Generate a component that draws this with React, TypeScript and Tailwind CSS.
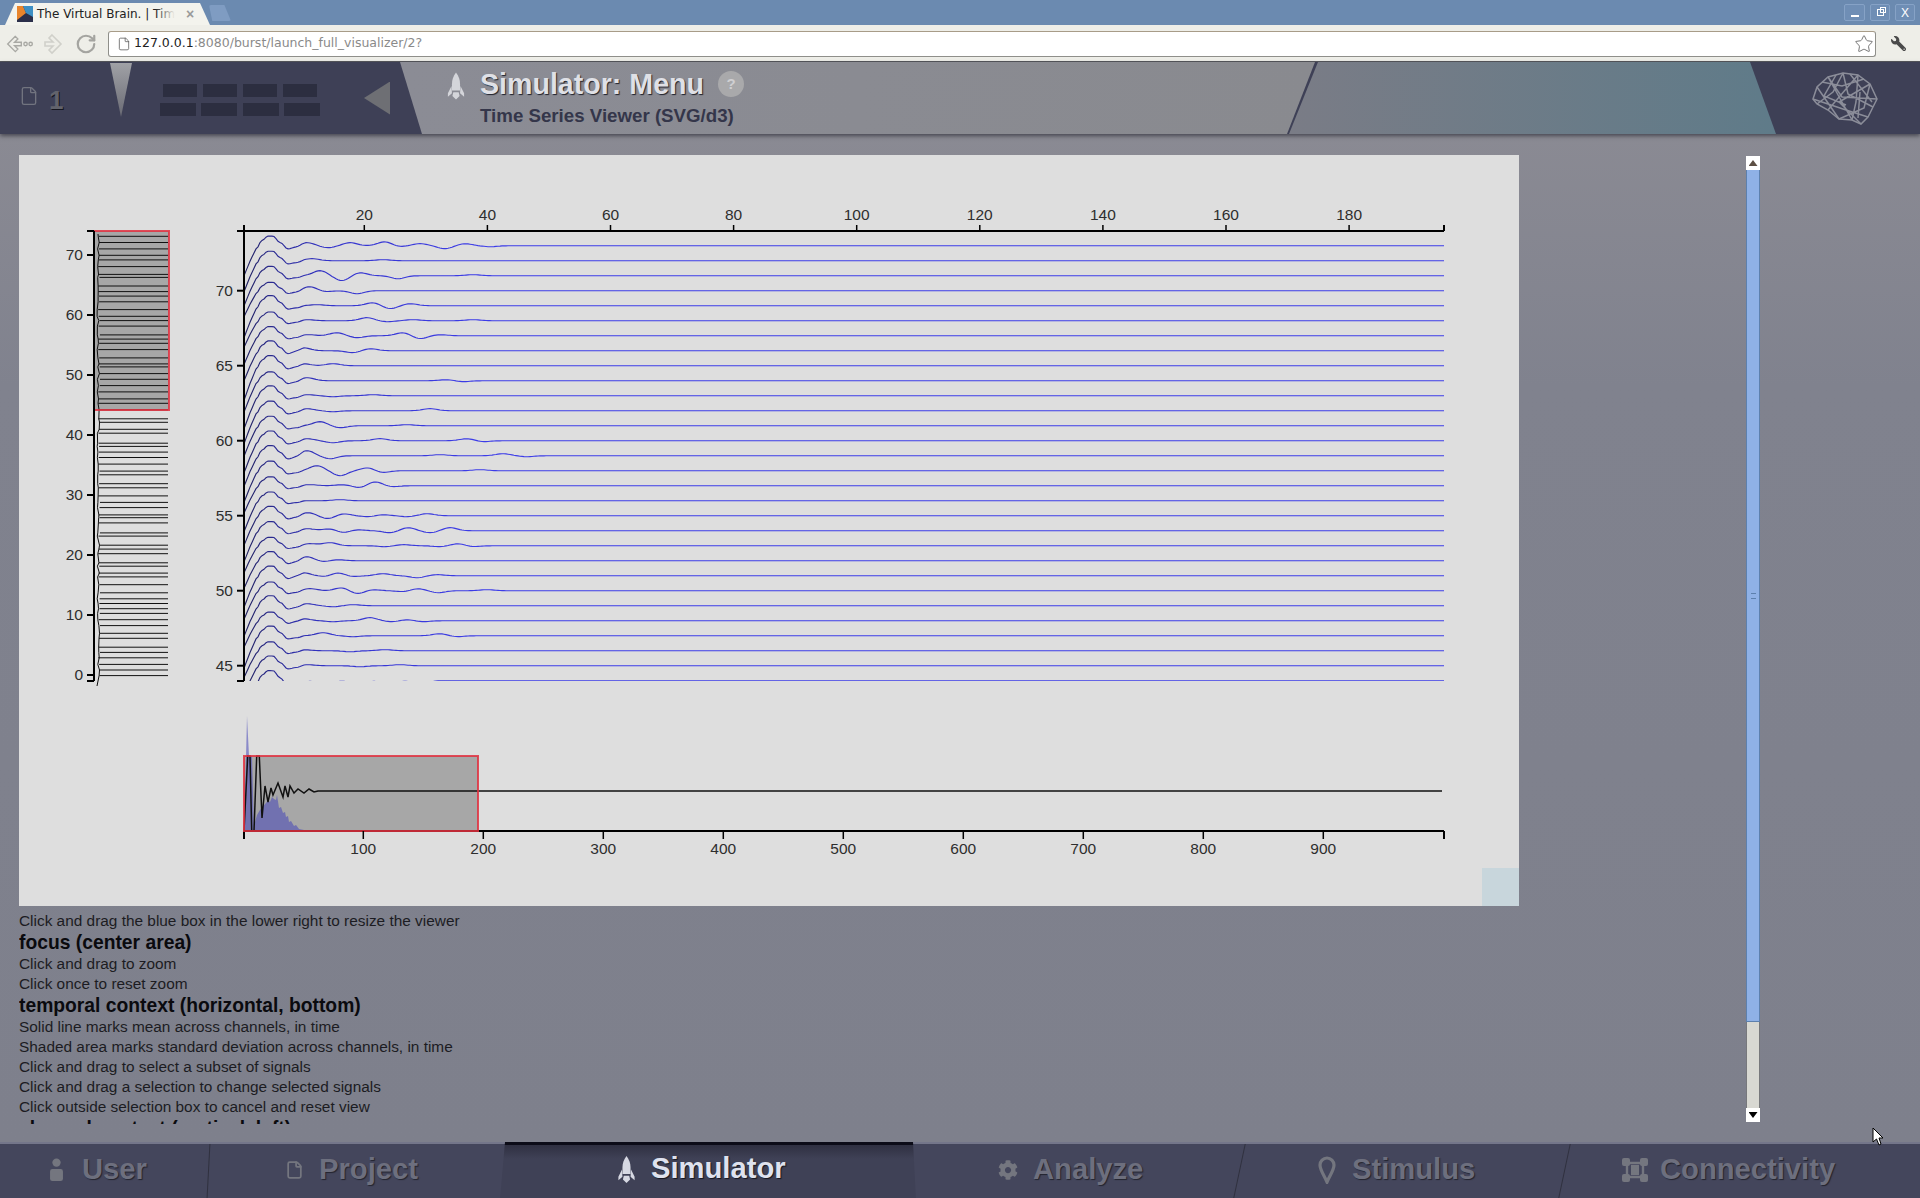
import { File, RotateCw, Star } from "lucide-react";
import { FaCog, FaWrench } from "react-icons/fa";

type Bump = [number, number];

// channel 73 down to channel 44, [screen x, offset in px]
const TRACE_BUMPS: Bump[][] = [
  [[307, -3], [328, 2], [350, -3], [385, -4], [398, 1], [420, -2], [445, 3], [465, -2], [490, 1]],
  [[312, -2], [383, -1]],
  [[320, -5], [342, 5], [360, -3], [398, 3], [473, -1]],
  [[310, -4], [325, 1], [357, 3]],
  [[317, -1], [373, -3], [390, 3], [410, -2]],
  [[307, -1], [367, -3], [387, 1], [413, -1], [473, -1]],
  [[308, -1], [337, -3], [357, 2], [403, -3], [420, 3], [440, -1]],
  [[303, -3], [353, 2], [370, -2]],
  [[303, -2], [333, -2]],
  [[307, -3], [447, -1], [463, 1]],
  [[307, -1], [333, 1], [373, -1]],
  [[307, -2], [333, 1], [430, -2]],
  [[320, -4], [340, 2], [407, -1]],
  [[307, -2], [333, 2], [380, -2], [467, -2], [483, 1]],
  [[307, -5], [330, 3], [440, -1], [503, -2], [527, 1]],
  [[317, -5], [340, 5], [368, -3], [382, 2], [480, -1]],
  [[310, -1], [343, -1], [360, 2], [375, -4], [392, 1]],
  [[340, -1]],
  [[308, -3], [328, 3], [343, -2], [368, 1], [383, -1], [407, 1], [427, -2]],
  [[307, -2], [330, -2], [343, 2], [357, -1], [390, 2], [408, -3], [430, 2], [450, -3]],
  [[310, -2], [330, -3], [385, 1], [403, -1], [440, 1], [458, -2], [473, 1]],
  [[307, -4], [323, 1], [337, -1]],
  [[303, -3], [327, 1], [338, -3], [352, 1], [383, -2], [417, 2], [437, -1]],
  [[310, -2], [342, -3], [357, 3], [373, -1], [403, 1], [418, -2], [438, 2], [487, -1]],
  [[307, -2], [333, 1], [353, -1]],
  [[303, -2], [333, 1], [370, -3], [392, 1], [407, -1], [423, 1]],
  [[323, -3], [353, 1], [440, -2], [457, 1]],
  [[303, -1], [350, 1], [385, -1]],
  [[307, -1], [360, 1], [400, -1]],
  [[295, 4], [326, 4], [358, 4], [389, 4], [421, 4]],
];

const START_SHAPE: Bump[] = [
  [244, 27], [250, 14], [256, 3], [262, -5], [268, -9], [273, -9], [280, -3], [288, 3], [296, 2], [306, 0],
];

function noise(seed: number) {
  const v = Math.sin(seed * 127.1 + 11.7) * 43758.5453;
  return v - Math.floor(v);
}

function startOffset(x: number) {
  for (let i = 0; i < START_SHAPE.length - 1; i++) {
    const [x0, y0] = START_SHAPE[i];
    const [x1, y1] = START_SHAPE[i + 1];
    if (x >= x0 && x <= x1) {
      const t = (1 - Math.cos((Math.PI * (x - x0)) / (x1 - x0))) / 2;
      return y0 + (y1 - y0) * (i < 2 ? (x - x0) / (x1 - x0) : t);
    }
  }
  return 0;
}

function tracePath(row: number) {
  const base = 245.7 + row * 15;
  const bumps = TRACE_BUMPS[row];
  const scale = 0.92 + noise(row) * 0.2;
  let d = "";
  for (let x = 244; x <= 620; x += 2) {
    const extra = x < 256 ? (noise(row + 40) * 5 * (256 - x)) / 12 : 0;
    let y = base + startOffset(x) * scale + extra;
    for (const [bx, amp] of bumps) y += amp * Math.exp(-(((x - bx) / 10) ** 2));
    d += `${d ? "L" : "M"}${x} ${y.toFixed(1)}`;
  }
  return `${d}L1444 ${base.toFixed(1)}`;
}

function overviewPaths() {
  const rows: string[] = [];
  let spine = "M98 234";
  for (let ch = 73; ch >= 0; ch--) {
    const y = 675 - ch * 6 + (noise(ch + 90) - 0.5) * 4.5;
    rows.push(`M${98 + noise(ch) * 2} ${y.toFixed(1)}L168 ${y.toFixed(1)}`);
    spine += `L${(97 + noise(ch + 7) * 2.5).toFixed(1)} ${y.toFixed(1)}`;
  }
  return `${rows.join("")}${spine}L97 686`;
}

const AREA_POINTS =
  "244,831 245,800 247,716 249,756 252,756 254,831 255,822 257,815 260,810 263,806 266,803 268,800 270,802 272,797 274,799 276,800 277,795 279,808 281,807 283,813 285,812 286,817 288,816 289,822 291,821 294,826 296,825 299,829 304,830 308,831";
const MEAN_POINTS =
  "244,831 247.7,756 250,756 251.7,831 254,831 256.7,756 259.3,756 262,818 265,786 268,802 271,788 273,795 278,783 283,797 285,786 288,797 290,786 294,793 298,789 304,793 309,789 314,792 318,791 1442,791";

function TimeSeriesChart() {
  const topTicks = [20, 40, 60, 80, 100, 120, 140, 160, 180];
  const sideTicks = [70, 65, 60, 55, 50, 45];
  const overviewTicks = [70, 60, 50, 40, 30, 20, 10, 0];
  const contextTicks = [100, 200, 300, 400, 500, 600, 700, 800, 900];
  return (
    <svg viewBox="19 155 1500 751" className="block h-full w-full text-[15.5px] fill-[#2e2e2e]">
      <defs>
        <clipPath id="focus-clip">
          <rect x="244" y="231" width="1200" height="450" />
        </clipPath>
        <linearGradient id="trace-stroke" gradientUnits="userSpaceOnUse" x1="244" y1="0" x2="640" y2="0">
          <stop offset="0" stopColor="#22225e" />
          <stop offset="0.07" stopColor="#2a2a90" />
          <stop offset="0.22" stopColor="#3434cc" />
          <stop offset="0.6" stopColor="#3c3ce8" />
        </linearGradient>
      </defs>

      {/* channel overview, left */}
      <rect x="94" y="231" width="75" height="179" fill="#7a7a7a" fillOpacity="0.55" />
      <path d={overviewPaths()} fill="none" stroke="#111" strokeWidth="1" />
      <rect x="94" y="231" width="75" height="179" fill="none" stroke="#e0303f" strokeOpacity="0.85" strokeWidth="2" />
      <path d="M94 231V681M87 231H94M87 681H94" stroke="#000" strokeWidth="2" fill="none" />
      {overviewTicks.map((t) => (
        <g key={t}>
          <path d={`M87 ${675 - t * 6}H94`} stroke="#000" strokeWidth="2" />
          <text x="83" y={680 - t * 6} textAnchor="end">
            {t}
          </text>
        </g>
      ))}

      {/* focus area */}
      <g clipPath="url(#focus-clip)" fill="none" stroke="url(#trace-stroke)" strokeWidth="1.15">
        {TRACE_BUMPS.map((_, row) => (
          <path key={row} d={tracePath(row)} />
        ))}
      </g>
      <path d="M244 225V681M237 231H1444M1444 225V231M237 681H244" stroke="#000" strokeWidth="2" fill="none" />
      {topTicks.map((t) => {
        const x = 364.3 + (t - 20) * 6.155;
        return (
          <g key={t}>
            <path d={`M${x} 225V231`} stroke="#000" strokeWidth="1.5" />
            <text x={x} y="220" textAnchor="middle">
              {t}
            </text>
          </g>
        );
      })}
      {sideTicks.map((t) => {
        const y = 290.7 + (70 - t) * 15;
        return (
          <g key={t}>
            <path d={`M237 ${y}H244`} stroke="#000" strokeWidth="2" />
            <text x="233" y={y + 5} textAnchor="end">
              {t}
            </text>
          </g>
        );
      })}

      {/* temporal context, bottom */}
      <rect x="244" y="756" width="234" height="75" fill="#7a7a7a" fillOpacity="0.55" />
      <polygon points={AREA_POINTS} fill="#4646b8" fillOpacity="0.55" />
      <polyline points={MEAN_POINTS} fill="none" stroke="#111" strokeWidth="1.5" />
      <path d="M244 831H1444M244 831V839M1444 831V839" stroke="#000" strokeWidth="2" fill="none" />
      <rect x="244" y="756" width="234" height="75" fill="none" stroke="#e0303f" strokeOpacity="0.85" strokeWidth="2" />
      {contextTicks.map((t) => {
        const x = 243.3 + t * 1.2;
        return (
          <g key={t}>
            <path d={`M${x} 831V839`} stroke="#000" strokeWidth="1.5" />
            <text x={x} y="854" textAnchor="middle">
              {t}
            </text>
          </g>
        );
      })}
    </svg>
  );
}

function RocketIcon({ className }: { className: string }) {
  return (
    <svg viewBox="0 0 20 30" className={className} fill="currentColor">
      <path d="M10 0C13 4 14.5 8 14.5 13V20H5.5V13C5.5 8 7 4 10 0Z" />
      <path d="M5 15L1 23V27L5.5 23ZM15 15L19 23V27L14.5 23ZM7 22H13L14 26L10 30L6 26Z" />
    </svg>
  );
}

function UserIcon({ className }: { className: string }) {
  return (
    <svg viewBox="0 0 16 26" className={className} fill="currentColor">
      <circle cx="8" cy="5" r="4.5" />
      <rect x="1" y="12" width="14" height="13" rx="2.5" />
    </svg>
  );
}

function PinIcon({ className }: { className: string }) {
  return (
    <svg viewBox="0 0 18 28" className={className} fill="none" stroke="currentColor" strokeWidth="3.2">
      <path d="M9 26C6 19 2 14 2 9A7 7 0 0 1 16 9C16 14 12 19 9 26Z" />
    </svg>
  );
}

function ConnectivityIcon({ className }: { className: string }) {
  return (
    <svg viewBox="0 0 26 24" className={className} fill="currentColor">
      <path d="M5 5H21V19H5Z" fill="none" stroke="currentColor" strokeWidth="2.4" />
      <rect x="0" y="0" width="8" height="8" rx="2" />
      <rect x="18" y="0" width="8" height="8" rx="2" />
      <rect x="0" y="16" width="8" height="8" rx="2" />
      <rect x="18" y="16" width="8" height="8" rx="2" />
      <rect x="9" y="7" width="8" height="10" />
    </svg>
  );
}

function BrainMesh() {
  return (
    <svg viewBox="0 0 66 53" className="h-[53px] w-[66px]" fill="none" stroke="#8b8d99" strokeWidth="1.5">
      <path d="M1 27L5 15L16 5L31 1L46 3L58 12L65 27L61 35L56 45L49 52L40 48L27 47L16 38L5 32Z" />
      <path d="M5 15L27 47M16 5L40 48M31 1L21 20L5 32M46 3L16 38M58 12L27 30L49 52M65 27L30 25L16 5M61 35L36 22L31 1M56 45L34 38L1 27M46 3L44 30L40 48M58 12L52 36L27 47M10 10L30 14L52 7M38 2L60 30M24 3L12 24L34 33M48 20L46 46" />
    </svg>
  );
}

function ChromeBar() {
  return (
    <>
      <div className="flex h-[25px] items-end bg-[#6b8ab0] pl-[5px]">
        <div className="relative flex h-[22px] w-[205px] items-center overflow-hidden bg-[#f3f3ed] pl-[12px]">
          <svg viewBox="0 0 16 16" className="mr-[4px] h-[16px] w-[16px] flex-none">
            <rect width="16" height="16" fill="#2b2f4a" />
            <path d="M0 0H6L9 7L0 14Z" fill="#e8842c" />
            <path d="M16 0H6L9 7L16 11Z" fill="#3d8fc4" />
          </svg>
          <span className="whitespace-nowrap font-['DejaVu_Sans',sans-serif] text-[12px] text-[#222]">The Virtual Brain. | Tim</span>
          <div className="absolute left-[150px] top-0 h-full w-[20px] bg-[linear-gradient(90deg,rgba(243,243,237,0),#f3f3ed)]" />
          <span className="absolute left-[181px] text-[14px] font-bold leading-none text-[#9a9a9a]">×</span>
          <div className="absolute left-0 top-0 h-full w-[10px] bg-[#6b8ab0] [clip-path:polygon(0_0,100%_0,0_100%)]" />
          <div className="absolute right-0 top-0 h-full w-[10px] bg-[#6b8ab0] [clip-path:polygon(0_0,100%_0,100%_100%)]" />
        </div>
        <div className="mb-[4px] ml-[-1px] h-[16px] w-[22px] rounded-[2px] bg-[#7f9cc2] [clip-path:polygon(0_0,70%_0,100%_100%,15%_100%)]" />
        <div className="ml-auto mb-[4px] mr-[5px] flex gap-[5px] text-white">
          <div className="flex h-[17px] w-[21px] items-end justify-center rounded-[2px] border border-[#86a2c6] bg-[#6f8eb5] pb-[3px]">
            <div className="h-[2px] w-[8px] bg-white" />
          </div>
          <div className="flex h-[17px] w-[20px] items-center justify-center rounded-[2px] border border-[#86a2c6] bg-[#6f8eb5]">
            <div className="relative h-[7px] w-[7px] border border-white">
              <div className="absolute left-[2px] top-[-3px] h-[6px] w-[6px] border border-white" />
            </div>
          </div>
          <div className="flex h-[17px] w-[20px] items-center justify-center rounded-[2px] border border-[#86a2c6] bg-[#6f8eb5] text-[12px] leading-none">X</div>
        </div>
      </div>
      <div className="flex h-[37px] items-center border-b border-[#55565c] bg-[#eeeee8] pl-[6px] pr-[10px] pt-[1px]">
        <svg viewBox="0 0 40 22" className="h-[22px] w-[34px] flex-none" fill="none" stroke="#a9a9a4" strokeWidth="1.6">
          <path d="M11 2L2 11L11 20L14 17L10 13H18V9H10L14 5Z" />
          <circle cx="23" cy="11" r="2" />
          <circle cx="29" cy="11" r="2" />
        </svg>
        <svg viewBox="0 0 20 22" className="ml-[3px] h-[22px] w-[20px] flex-none" fill="none" stroke="#d0d0ca" strokeWidth="1.6">
          <path d="M9 2L18 11L9 20L6 17L10 13H2V9H10L6 5Z" />
        </svg>
        <RotateCw className="ml-[12px] h-[22px] w-[22px] flex-none text-[#a4a4a0]" strokeWidth={2.4} />
        <div className="ml-[11px] flex h-[26px] flex-1 items-center rounded-[3px] border border-[#8f8f8a] border-t-[#a89c88] bg-white pl-[8px] pr-[1px] font-['DejaVu_Sans',sans-serif] text-[12.5px]">
          <File className="mr-[3px] h-[14px] w-[14px] flex-none text-[#555]" strokeWidth={1.3} />
          <span className="text-[#222]">127.0.0.1</span>
          <span className="text-[#8a8a8a]">:8080/burst/launch_full_visualizer/2?</span>
          <Star className="ml-auto h-[20px] w-[20px] text-[#777]" strokeWidth={1.2} />
        </div>
        <FaWrench className="ml-[15px] mr-[4px] h-[15px] w-[15px] flex-none -scale-x-100 text-[#4a4a4a]" />
      </div>
    </>
  );
}

function HeaderBar() {
  const cells = [0, 1, 2, 3];
  return (
    <div className="relative z-10 flex h-[72px] flex-none bg-[#3e4056] shadow-[0_2px_4px_rgba(30,30,40,0.6)]">
      <div className="flex w-[400px] flex-none items-center">
        <File className="ml-[19px] mt-[-4px] h-[20px] w-[20px] text-[#72747f]" strokeWidth={1.6} />
        <span className="ml-[10px] mt-[4px] w-[16px] text-[26px] font-bold text-[#62636c] [text-shadow:1px_1px_0_#15161f]">1</span>
        <div className="ml-[45px] mt-[-16px] h-[54px] w-[22px] flex-none bg-[linear-gradient(180deg,#a0a1a6,#6a6b74)] [clip-path:polygon(0_0,100%_0,50%_100%)]" />
        <div className="ml-[28px] flex w-[160px] flex-none flex-col gap-[6px] pt-[3px]">
          <div className="flex justify-between px-[3px]">
            {cells.map((i) => (
              <div key={i} className="h-[13px] w-[34px] bg-[#2c2e40]" />
            ))}
          </div>
          <div className="flex justify-between">
            {cells.map((i) => (
              <div key={i} className="h-[13px] w-[36px] bg-[#2c2e40]" />
            ))}
          </div>
        </div>
        <div className="ml-[44px] h-[33px] w-[26px] flex-none bg-[#6e6f74] [clip-path:polygon(100%_0,100%_100%,0_50%)]" />
      </div>
      <div className="flex w-[915px] flex-none items-start bg-[linear-gradient(90deg,#8b8c95,#898a8f)] pl-[47px] [clip-path:polygon(0_0,100%_0,calc(100%-28px)_100%,22px_100%)]">
        <RocketIcon className="mt-[10px] h-[28px] w-[18px] flex-none text-[#d4d5da]" />
        <div className="ml-[15px] pt-[6px]">
          <div className="flex items-center">
            <span className="text-[28.6px] font-bold leading-[32px] text-[#dfe0e6] [text-shadow:1px_1px_1px_#20212c]">Simulator: Menu</span>
            <span className="ml-[14px] flex h-[26px] w-[26px] items-center justify-center rounded-full bg-[#a9a9ab] text-[15px] font-bold text-[#cfcfd2]">?</span>
          </div>
          <div className="mt-[5px] text-[18.7px] font-bold leading-[22px] text-[#34364a]">Time Series Viewer (SVG/d3)</div>
        </div>
      </div>
      <div className="ml-[-26px] w-[487px] flex-none bg-[linear-gradient(90deg,#7a7c86,#5f7b89)] [clip-path:polygon(29px_0,461px_0,100%_100%,0_100%)]" />
      <div className="flex flex-1 items-center justify-end pr-[42px]">
        <BrainMesh />
      </div>
    </div>
  );
}

function HelpText() {
  const rowClass = "text-[15.4px] leading-[20px] text-[#1c1c22]";
  const headClass = "text-[19.3px] font-bold leading-[23px] text-[#0a0a0e]";
  return (
    <div className="mt-[5px] min-h-0 flex-1 overflow-hidden">
      <p className={rowClass}>Click and drag the blue box in the lower right to resize the viewer</p>
      <h3 className={headClass}>focus (center area)</h3>
      <p className={rowClass}>Click and drag to zoom</p>
      <p className={rowClass}>Click once to reset zoom</p>
      <h3 className={headClass}>temporal context (horizontal, bottom)</h3>
      <p className={rowClass}>Solid line marks mean across channels, in time</p>
      <p className={rowClass}>Shaded area marks standard deviation across channels, in time</p>
      <p className={rowClass}>Click and drag to select a subset of signals</p>
      <p className={rowClass}>Click and drag a selection to change selected signals</p>
      <p className={rowClass}>Click outside selection box to cancel and reset view</p>
      <h3 className={headClass}>channel context (vertical, left)</h3>
    </div>
  );
}

function ScrollBar() {
  return (
    <div className="mt-[1px] flex h-[966px] w-[14px] flex-none flex-col">
      <div className="flex h-[14px] flex-none items-center justify-center bg-white">
        <div className="h-[6px] w-[9px] bg-[#5d4f44] [clip-path:polygon(50%_0,100%_100%,0_100%)]" />
      </div>
      <div className="flex h-[852px] flex-none items-center justify-center border-x border-b border-[#5d80ad] bg-[#8fb1e6]">
        <div className="h-[6px] w-[5px] border-y border-[#5d80ad]" />
      </div>
      <div className="flex-1 border-x border-[#77787c] bg-[#d8d8d2]" />
      <div className="flex h-[14px] flex-none items-center justify-center bg-white">
        <div className="h-[6px] w-[9px] bg-black [clip-path:polygon(0_0,100%_0,50%_100%)]" />
      </div>
    </div>
  );
}

function BottomNav() {
  return (
    <div className="flex h-[56px] flex-none border-t-2 border-[#74768a] bg-[#44465c] pb-[2px] text-[29.2px] font-bold text-[#6d6f7e] [text-shadow:1px_1px_1px_#23242f]">
      <div className="relative flex w-[209px] flex-none items-center pl-[49px]">
        <UserIcon className="mr-[18px] h-[24px] w-[15px] flex-none text-[#74767f]" />
        User
        <div className="absolute bottom-[-2px] right-0 top-0 w-px -skew-x-3 bg-[#30313f]" />
      </div>
      <div className="flex w-[291px] flex-none items-center pl-[76px]">
        <File className="mr-[15px] h-[24px] w-[19px] flex-none text-[#74767f]" strokeWidth={2.2} />
        Project
      </div>
      <div className="mb-[-2px] mt-[-2px] flex w-[416px] flex-none items-center bg-[linear-gradient(180deg,#0c0c18_3px,#2f3041_3px,#3f4156_30%)] pb-[2px] pl-[117px] text-[#dfe2ee] [clip-path:polygon(5px_0,413px_0,100%_100%,0_100%)] [text-shadow:1px_1px_1px_#15161f]">
        <RocketIcon className="mr-[15px] h-[27px] w-[19px] flex-none text-[#d6d8e2]" />
        Simulator
      </div>
      <div className="relative flex w-[324px] flex-none items-center pl-[82px]">
        <FaCog className="mr-[15px] h-[20px] w-[20px] flex-none text-[#74767f]" />
        Analyze
        <div className="absolute bottom-[-2px] right-0 top-0 w-px -skew-x-12 bg-[#30313f]" />
      </div>
      <div className="relative flex w-[325px] flex-none items-center pl-[78px]">
        <PinIcon className="mr-[16px] h-[28px] w-[18px] flex-none text-[#74767f]" />
        Stimulus
        <div className="absolute bottom-[-2px] right-0 top-0 w-px -skew-x-12 bg-[#30313f]" />
      </div>
      <div className="flex flex-1 items-center pl-[57px]">
        <ConnectivityIcon className="mr-[12px] h-[24px] w-[26px] flex-none text-[#74767f]" />
        Connectivity
      </div>
    </div>
  );
}

export default function App() {
  return (
    <div className="relative flex h-[1198px] w-[1920px] flex-col overflow-hidden bg-[#7f818e] font-['Liberation_Sans',Arial,sans-serif]">
      <ChromeBar />
      <HeaderBar />
      <div className="flex min-h-0 flex-1 bg-[linear-gradient(180deg,#8a8a93,#80828e_25%,#7e808c)] pl-[19px] pt-[21px]">
        <div className="flex h-[969px] w-[1727px] flex-none flex-col">
          <div className="relative h-[751px] w-[1500px] flex-none bg-[#dedede]">
            <TimeSeriesChart />
            <div className="absolute bottom-0 right-0 h-[38px] w-[37px] bg-[#c8d6dc]" />
          </div>
          <HelpText />
        </div>
        <ScrollBar />
      </div>
      <BottomNav />
      {/* mouse pointer */}
      <svg viewBox="0 0 12 19" className="absolute left-[1872px] top-[1127px] h-[19px] w-[12px]">
        <path d="M1 1V15L4.5 12L7 18L9 17L7 11H11Z" fill="#fff" stroke="#000" strokeWidth="1" />
      </svg>
    </div>
  );
}
